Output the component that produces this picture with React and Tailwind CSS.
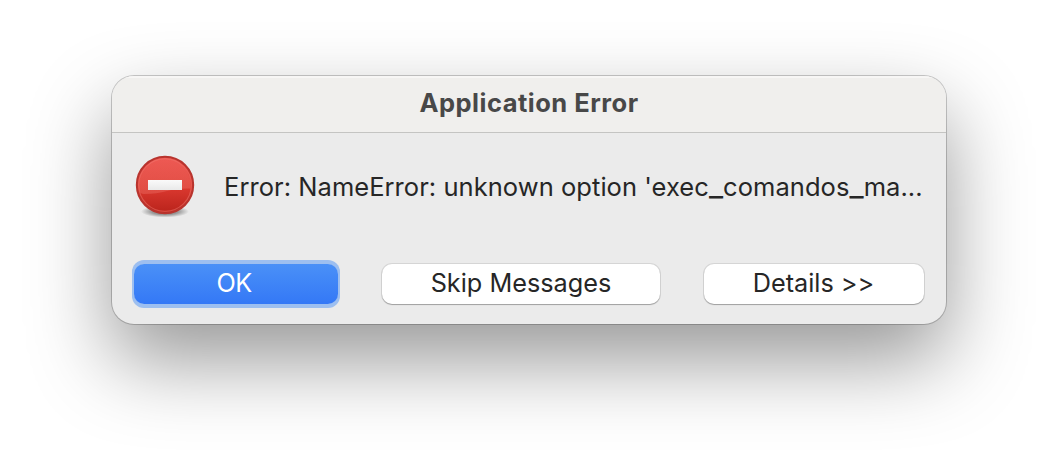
function ErrorIcon() {
  return (
    <svg className="h-[66px] w-[64px] shrink-0" viewBox="0 0 64 66" fill="none">
      <defs>
        <linearGradient id="disc" x1="0" y1="0" x2="0" y2="1">
          <stop offset="0" stopColor="#ea4a45" />
          <stop offset="0.55" stopColor="#da382f" />
          <stop offset="1" stopColor="#b9231b" />
        </linearGradient>
        <linearGradient id="gloss" x1="0" y1="0" x2="0" y2="1">
          <stop offset="0" stopColor="#ff9a90" stopOpacity="0.2" />
          <stop offset="1" stopColor="#ff9a90" stopOpacity="0.24" />
        </linearGradient>
        <linearGradient id="bar" x1="0" y1="0" x2="0" y2="1">
          <stop offset="0" stopColor="#fafafa" />
          <stop offset="1" stopColor="#e9e9e9" />
        </linearGradient>
        <radialGradient id="ground">
          <stop offset="0" stopColor="#000" stopOpacity="0.55" />
          <stop offset="0.55" stopColor="#000" stopOpacity="0.35" />
          <stop offset="1" stopColor="#000" stopOpacity="0" />
        </radialGradient>
      </defs>
      <ellipse cx="32" cy="57.5" rx="24" ry="6" fill="url(#ground)" />
      <circle cx="32" cy="31" r="28.2" fill="url(#disc)" stroke="#b8342e" strokeWidth="2" />
      <path d="M32 4.5A26.5 26.5 0 0 0 6 36Q7 40 11 40Q24 40 34 37Q44 34 57.5 34.5A26.5 26.5 0 0 0 32 4.5Z" fill="url(#gloss)" />
      <circle cx="32" cy="31" r="26.4" stroke="#f28078" strokeOpacity="0.45" strokeWidth="1.2" />
      <rect x="15" y="26" width="34" height="10" fill="url(#bar)" />
    </svg>
  );
}

export default function App() {
  return (
    <main className="h-[472px] w-[1058px] overflow-hidden bg-white px-28 pt-[76px] font-['Inter',sans-serif] text-[#262626]">
      <section
        role="alertdialog"
        aria-labelledby="title"
        className="flex h-[248px] w-[834px] flex-col overflow-hidden rounded-[22px] bg-[#ebebeb] shadow-[0_0_0_1px_rgba(0,0,0,0.2),0_36px_82px_rgba(0,0,0,0.41)]"
      >
        <header className="flex h-[57px] shrink-0 items-center justify-center border-b border-[#c4c4c2] bg-[#f0efed] pb-[2px] shadow-[inset_0_2px_0_#f7f6f5]">
          <h1 id="title" className="text-[25.5px] leading-8 font-bold tracking-[0.5px] whitespace-nowrap text-[#484848]">
            Application Error
          </h1>
        </header>
        <div className="flex h-[131px] shrink-0 items-start pt-[21px] pl-[21px]">
          <ErrorIcon />
          <p className="mt-[15px] ml-[27px] text-[25.5px] leading-8 tracking-[0.05px] whitespace-nowrap">
            Error: NameError: unknown option 'exec<span className="text-[31px] leading-none">_</span>comandos<span className="text-[31px] leading-none">_</span>ma...
          </p>
        </div>
        <footer className="flex h-10 pl-[22px] text-[25.25px] leading-8">
          <button className="flex h-10 w-[204px] items-start justify-center rounded-[10px] bg-linear-to-b from-[#4a90f7] to-[#3478f6] pt-[3px] pr-1 text-white shadow-[0_0_0_2px_#9dbff0,0_-2px_0_2px_#9dbff0,0_2px_0_2px_#9dbff0]">
            <span className="tracking-[-0.6px]">OK</span>
          </button>
          <button className="ml-11 flex h-10 w-[278px] items-start justify-center rounded-[10px] bg-white pt-[3px] shadow-[0_0_0_1px_rgba(0,0,0,0.09),0_1px_1px_rgba(0,0,0,0.25)]">
            <span className="whitespace-nowrap">Skip Messages</span>
          </button>
          <button className="ml-11 flex h-10 w-[220px] items-start justify-center rounded-[10px] bg-white pt-[3px] pr-[1px] shadow-[0_0_0_1px_rgba(0,0,0,0.09),0_1px_1px_rgba(0,0,0,0.25)]">
            <span className="whitespace-nowrap">Details &gt;&gt;</span>
          </button>
        </footer>
      </section>
    </main>
  );
}
